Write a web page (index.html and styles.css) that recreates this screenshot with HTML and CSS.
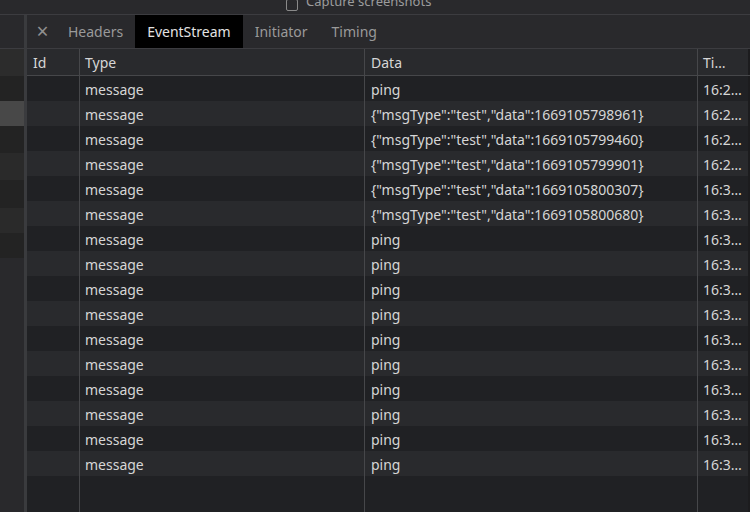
FILE: index.html
```html
<!DOCTYPE html>
<html>
<head>
<meta charset="utf-8">
<link rel="stylesheet" href="styles.css">
</head>
<body>
<div class="topbar">
  <span class="check"></span>
  <span class="toplabel">Capture screenshots</span>
</div>
<div class="main">
  <div class="sidebar">
    <div class="side-head"></div>
    <div class="side-row s-col"></div>
    <div class="side-row s-dark"></div>
    <div class="side-row s-sel"></div>
    <div class="side-row s-dark s27"></div>
    <div class="side-row s-light s27"></div>
    <div class="side-row s-dark s28"></div>
    <div class="side-row s-light"></div>
    <div class="side-row s-dark"></div>
  </div>
  <div class="divider"></div>
  <div class="panel">
    <div class="tabs">
      <span class="tab close">×</span>
      <span class="tab">Headers</span>
      <span class="tab active">EventStream</span>
      <span class="tab">Initiator</span>
      <span class="tab">Timing</span>
    </div>
    <div class="grid">
      <div class="row head"><div class="c">Id</div><div class="c">Type</div><div class="c">Data</div><div class="c">Ti…</div></div>
      <div class="row"><div class="c"></div><div class="c">message</div><div class="c">ping</div><div class="c">16:2…</div></div>
      <div class="row"><div class="c"></div><div class="c">message</div><div class="c">{"msgType":"test","data":1669105798961}</div><div class="c">16:2…</div></div>
      <div class="row"><div class="c"></div><div class="c">message</div><div class="c">{"msgType":"test","data":1669105799460}</div><div class="c">16:2…</div></div>
      <div class="row"><div class="c"></div><div class="c">message</div><div class="c">{"msgType":"test","data":1669105799901}</div><div class="c">16:2…</div></div>
      <div class="row"><div class="c"></div><div class="c">message</div><div class="c">{"msgType":"test","data":1669105800307}</div><div class="c">16:3…</div></div>
      <div class="row"><div class="c"></div><div class="c">message</div><div class="c">{"msgType":"test","data":1669105800680}</div><div class="c">16:3…</div></div>
      <div class="row"><div class="c"></div><div class="c">message</div><div class="c">ping</div><div class="c">16:3…</div></div>
      <div class="row"><div class="c"></div><div class="c">message</div><div class="c">ping</div><div class="c">16:3…</div></div>
      <div class="row"><div class="c"></div><div class="c">message</div><div class="c">ping</div><div class="c">16:3…</div></div>
      <div class="row"><div class="c"></div><div class="c">message</div><div class="c">ping</div><div class="c">16:3…</div></div>
      <div class="row"><div class="c"></div><div class="c">message</div><div class="c">ping</div><div class="c">16:3…</div></div>
      <div class="row"><div class="c"></div><div class="c">message</div><div class="c">ping</div><div class="c">16:3…</div></div>
      <div class="row"><div class="c"></div><div class="c">message</div><div class="c">ping</div><div class="c">16:3…</div></div>
      <div class="row"><div class="c"></div><div class="c">message</div><div class="c">ping</div><div class="c">16:3…</div></div>
      <div class="row"><div class="c"></div><div class="c">message</div><div class="c">ping</div><div class="c">16:3…</div></div>
      <div class="row"><div class="c"></div><div class="c">message</div><div class="c">ping</div><div class="c">16:3…</div></div>
      <div class="row filler"><div class="c"></div><div class="c"></div><div class="c"></div><div class="c"></div></div>
    </div>
  </div>
</div>
</body>
</html>
```
FILE: styles.css
```css
html, body {
  margin: 0;
  padding: 0;
  height: 100%;
  overflow: hidden;
}
body {
  background: #29292c;
  font-family: "Noto Sans", "Open Sans", sans-serif;
  font-size: 13px;
  color: #d6d6d6;
  display: flex;
  flex-direction: column;
}
.topbar {
  height: 14px;
  flex: none;
  border-bottom: 1px solid #3c3c40;
  overflow: hidden;
  display: flex;
  align-items: flex-end;
  padding-left: 286px;
  gap: 8px;
}
.check {
  width: 10px;
  height: 10px;
  border: 1px solid #8a8a8a;
  border-radius: 2px;
  margin-bottom: 3px;
  flex: none;
}
.toplabel {
  color: #9c9c9c;
  line-height: 16px;
  margin-bottom: 5px;
}
.main {
  flex: 1;
  display: flex;
  min-height: 0;
}
.sidebar {
  width: 24px;
  flex: none;
  display: flex;
  flex-direction: column;
}
.side-head {
  height: 33px;
  border-bottom: 1px solid #3c3c40;
}
.side-row { height: 25px; }
.s-col { height: 27px; background: #2c2c2c; }
.s-dark { background: #232323; }
.s-light { background: #2a2a2a; }
.s-sel { background: #484848; }
.s27 { height: 27px; }
.s28 { height: 28px; }
.divider {
  width: 3px;
  flex: none;
  background: #3a3b3e;
}
.panel {
  flex: 1;
  display: flex;
  flex-direction: column;
  min-width: 0;
}
.tabs {
  height: 33px;
  flex: none;
  border-bottom: 1px solid #3c3c40;
  display: flex;
  align-items: stretch;
}
.tab {
  display: flex;
  align-items: center;
  padding: 0 12px;
  color: #9a9a9a;
  font-size: 14px;
}
.tab.close {
  width: 29px;
  box-sizing: border-box;
  padding: 0 0 2px 2px;
  justify-content: center;
  font-size: 21px;
  color: #8f8f8f;
}
.tab.active {
  background: #000;
  color: #e3e3e3;
}
.grid {
  flex: 1;
  display: flex;
  flex-direction: column;
  min-height: 0;
}
.row {
  display: grid;
  grid-template-columns: 53px 285px 333px 1fr;
  height: 25px;
  flex: none;
  background: #202124;
}
.row:nth-child(odd) { background: #292a2d; }
.row.head {
  height: 27px;
  background: #292a2d;
  border-bottom: 1px solid #46474a;
  box-sizing: border-box;
}
.row.filler {
  flex: 1;
  background: #202124;
}
.c {
  border-right: 1px solid #46474a;
  padding-left: 6px;
  padding-top: 1px;
  white-space: nowrap;
  overflow: hidden;
  display: flex;
  align-items: center;
  font-size: 14px;
}
.c:nth-child(2) { padding-left: 5px; }
.c:last-child {
  border-right: 2px solid #1c1c1e;
  padding-left: 5px;
}
```
